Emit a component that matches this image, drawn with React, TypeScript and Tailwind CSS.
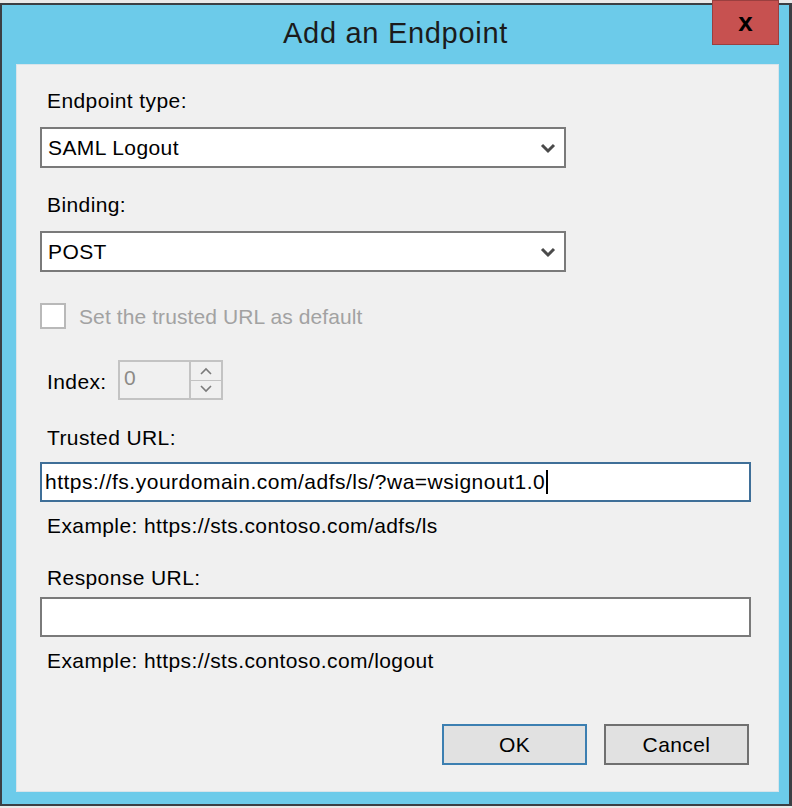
import React from "react";

const font = { fontFamily: '"Liberation Sans", Arial, sans-serif' };

function Chevron() {
  return (
    <svg width="16" height="12" viewBox="0 0 16 12" className="shrink-0">
      <polyline points="2,3 8,9 14,3" fill="none" stroke="#4a4a4a" strokeWidth="3" />
    </svg>
  );
}

function Select({ value }: { value: string }) {
  return (
    <div className="flex h-[41px] w-[526px] items-center justify-between border-2 border-[#7a7a7a] bg-white pl-[6px] pr-[8px] text-[21px] leading-none text-black">
      <span>{value}</span>
      <Chevron />
    </div>
  );
}

export default function App() {
  return (
    <div className="relative h-[808px] w-[792px] overflow-hidden bg-[#e9e9e9]" style={font}>
      <div className="absolute left-[0px] top-[3px] flex h-[803px] w-[792px] flex-col border-2 border-r-[3px] border-[#3b3f44] bg-[#6ccbea]">
        {/* title bar */}
        <div className="relative flex h-[59px] shrink-0 items-center justify-center">
          <span className="mt-[-2px] text-[29px] tracking-[0.7px] text-[#1b1b1b]">
            Add an Endpoint
          </span>
          <div className="absolute right-[10px] top-[-5px] flex h-[45px] w-[67px] items-center justify-center border border-[#9a3f3f] bg-[#c75150]">
            <span className="mt-[-2px] text-[26px] font-bold leading-none text-black">x</span>
          </div>
        </div>
        {/* panel */}
        <div className="ml-[14px] mr-[10px] flex h-[728px] flex-col border border-[#d8e4ea] bg-[#f0f0f0] pl-[23px] pt-[24px] text-[21px] leading-[24px] tracking-[0.4px] text-black">
          <div className="ml-[7px]">Endpoint type:</div>
          <div className="mt-[14px]"><Select value="SAML Logout" /></div>
          <div className="ml-[7px] mt-[25px]">Binding:</div>
          <div className="mt-[14px]"><Select value="POST" /></div>
          <div className="mt-[31px] flex items-center">
            <div className="h-[26px] w-[26px] border-2 border-[#b9b9b9] bg-white" />
            <span className="ml-[13px] mt-[2px] tracking-[0.1px] text-[#a2a2a2]">Set the trusted URL as default</span>
          </div>
          <div className="mt-[31px] flex items-center">
            <span className="ml-[7px] mt-[4px] w-[71px]">Index:</span>
            <div className="flex h-[40px] w-[105px] border-2 border-[#c3c3c3] bg-[#f0f0f0]">
              <div className="flex flex-1 items-start pl-[4px] pt-[4px] text-[#8c8a86]">0</div>
              <div className="flex w-[32px] flex-col border-l-2 border-[#c3c3c3]">
                <div className="flex flex-1 items-center justify-center border-b border-[#c3c3c3]">
                  <svg width="12" height="8" viewBox="0 0 12 8"><polyline points="1,7 6,2 11,7" fill="none" stroke="#7a7a7a" strokeWidth="1.6" /></svg>
                </div>
                <div className="flex flex-1 items-center justify-center">
                  <svg width="12" height="8" viewBox="0 0 12 8"><polyline points="1,1 6,6 11,1" fill="none" stroke="#7a7a7a" strokeWidth="1.6" /></svg>
                </div>
              </div>
            </div>
          </div>
          <div className="ml-[7px] mt-[26px]">Trusted URL:</div>
          <div className="mt-[12px] flex h-[40px] w-[711px] items-center border-2 border-[#3f6f98] bg-white pl-[3px]">
            <span className="tracking-[0.5px]">https://fs.yourdomain.com/adfs/ls/?wa=wsignout1.0</span>
            <span className="ml-[1px] h-[24px] w-[2px] bg-black" />
          </div>
          <div className="ml-[7px] mt-[12px]">Example: https://sts.contoso.com/adfs/ls</div>
          <div className="ml-[7px] mt-[28px]">Response URL:</div>
          <div className="mt-[7px] h-[40px] w-[711px] border-2 border-[#7a7a7a] bg-white" />
          <div className="ml-[7px] mt-[12px]">Example: https://sts.contoso.com/logout</div>
          <div className="mt-[51px] flex justify-end gap-[17px] pr-[29px]">
            <div className="flex h-[41px] w-[145px] items-center justify-center border-2 border-[#3c7fb1] bg-[#e1e1e1]">OK</div>
            <div className="flex h-[41px] w-[145px] items-center justify-center border-2 border-[#707070] bg-[#e1e1e1]">Cancel</div>
          </div>
        </div>
      </div>
    </div>
  );
}
